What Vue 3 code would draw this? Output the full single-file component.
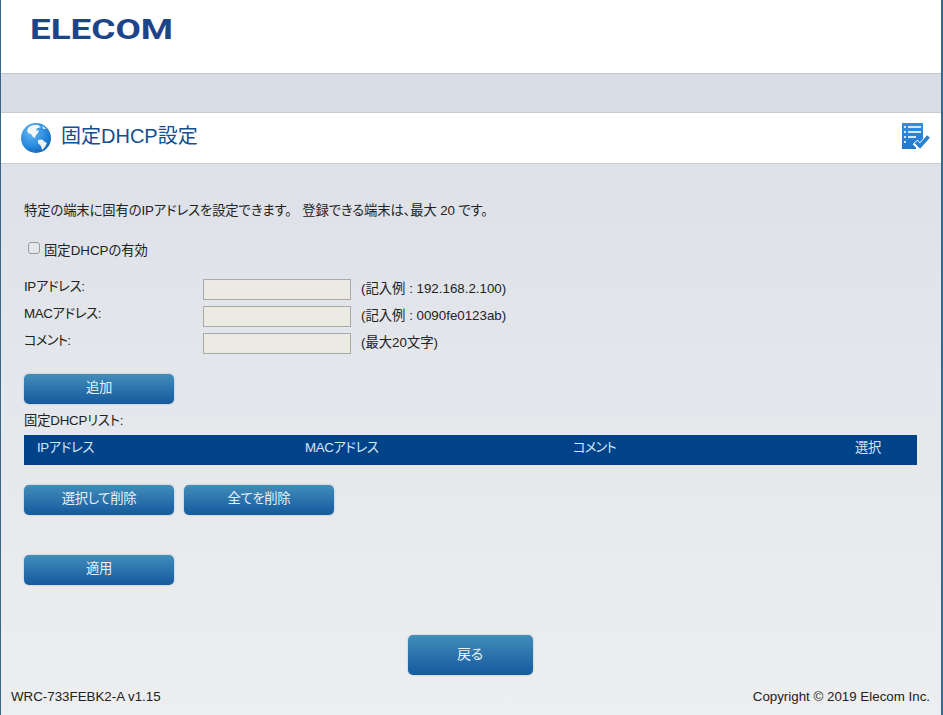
<script setup>
const rows = [
  { label: 'IPアドレス:', hint: '(記入例 : 192.168.2.100)' },
  { label: 'MACアドレス:', hint: '(記入例 : 0090fe0123ab)' },
  { label: 'コメント:', hint: '(最大20文字)' }
]
const cols = ['IPアドレス', 'MACアドレス', 'コメント', '選択']
</script>

<template>
  <div class="page">
    <header class="top">
      <svg class="logo" width="150" height="34" viewBox="0 0 150 34">
        <text x="-1" y="29" textLength="143" lengthAdjust="spacingAndGlyphs">ELECOM</text>
      </svg>
    </header>
    <div class="band"></div>
    <div class="title">
      <svg class="globe" width="32" height="32" viewBox="0 0 32 32">
        <defs>
          <radialGradient id="g" cx="35%" cy="30%" r="80%">
            <stop offset="0" stop-color="#62b8f2" />
            <stop offset="0.6" stop-color="#2a8ae0" />
            <stop offset="1" stop-color="#0f5fae" />
          </radialGradient>
        </defs>
        <circle cx="16" cy="16" r="15" fill="url(#g)" />
        <path d="M9 5c3-2 6-2.500 9-2l3 2-3 1-2 1 1 2 2-1-1 3-2 2-1 3-2-1-2-3-3-1-1-3z" fill="#f4f7f9" />
        <path d="M18 18l4-0.500 3 2.500 2 1-2 4-3 3-1-4-3-3z" fill="#eef3f2" />
        <path d="M22 4l2 1 2 2-3 0z" fill="#dfeaf3" />
      </svg>
      <h1>固定DHCP設定</h1>
      <svg class="check" width="30" height="30" viewBox="0 0 30 30">
        <defs>
          <linearGradient id="c" x1="0" y1="0" x2="0" y2="1">
            <stop offset="0" stop-color="#2f8fe6" />
            <stop offset="1" stop-color="#2277c9" />
          </linearGradient>
        </defs>
        <path d="M1 1h21v18l-7 6v2H1z" fill="url(#c)" />
        <g fill="#cfe7fa">
          <rect x="3" y="4" width="2" height="2" /><rect x="7" y="4" width="13" height="2" />
          <rect x="3" y="9" width="2" height="2" /><rect x="7" y="9" width="13" height="2" />
          <rect x="3" y="14" width="2" height="2" /><rect x="7" y="14" width="8" height="2" />
          <rect x="3" y="19" width="2" height="2" />
        </g>
        <path d="M14 20l5 5 9-10" fill="none" stroke="#fff" stroke-width="6.500" />
        <path d="M15 20l4 4 8.500-9.500" fill="none" stroke="#2a80d0" stroke-width="3.800" />
      </svg>
    </div>

    <main class="content">
      <p class="intro">特定の端末に固有のIPアドレスを設定できます。&nbsp;&nbsp; 登録できる端末は、最大 20 です。</p>
      <label class="enable"><input type="checkbox" /><span>固定DHCPの有効</span></label>
      <div class="form">
        <div v-for="r in rows" :key="r.label" class="row">
          <span class="lbl">{{ r.label }}</span>
          <input class="field" type="text" />
          <span class="hint">{{ r.hint }}</span>
        </div>
      </div>
      <button class="btn add">追加</button>
      <div class="list-label">固定DHCPリスト:</div>
      <div class="thead">
        <span v-for="c in cols" :key="c">{{ c }}</span>
      </div>
      <div class="actions">
        <button class="btn">選択して削除</button>
        <button class="btn">全てを削除</button>
      </div>
      <button class="btn apply">適用</button>
      <div class="back-wrap"><button class="btn back">戻る</button></div>
      <footer class="foot">
        <span>WRC-733FEBK2-A v1.15</span>
        <span>Copyright © 2019 Elecom Inc.</span>
      </footer>
    </main>
  </div>
</template>

<style>
html, body { margin: 0; padding: 0; }
</style>

<style scoped>
.page {
  width: 943px;
  height: 715px;
  box-sizing: border-box;
  border-left: 1px solid #3a6585;
  border-right: 2px solid #2f6b92;
  overflow: hidden;
  background: linear-gradient(#d9dee6 0%, #edeeef 100%);
  font-family: "Liberation Sans", "Noto Sans CJK JP", sans-serif;
  font-feature-settings: "palt";
  font-size: 13.33px;
  color: #222;
}
.top {
  height: 74px;
  background: #fff;
  border-bottom: 1px solid #c3c6cb;
  box-sizing: border-box;
  padding: 10px 0 0 30px;
}
.logo { display: block; overflow: visible; }
.logo text {
  font-family: Roboto, sans-serif;
  font-weight: 700;
  font-size: 27px;
  fill: #1c4489;
}
.band { height: 38px; background: #d9dee6; }
.title {
  height: 52px;
  box-sizing: border-box;
  background: #fff;
  border-top: 1px solid #c8ccd2;
  border-bottom: 1px solid #c8ccd2;
  display: flex;
  align-items: center;
  padding: 0 10px 0 19px;
}
.globe { flex: none; }
.check { flex: none; margin-bottom: 3px; }
h1 {
  margin: 0 0 8px 9px;
  flex: 1;
  font-size: 20px;
  font-weight: 400;
  color: #124f8e;
}
.content { padding: 0 23px; height: 551px; position: relative; }
.intro { margin: 0; padding-top: 39px; line-height: 15px; letter-spacing: -0.12px; }
.enable { display: flex; align-items: center; margin: 21px 0 0 3px; height: 20px; }
.enable input {
  appearance: none;
  width: 12px;
  height: 12px;
  margin: 0 4px 3px 1px;
  border: 1px solid #999;
  border-radius: 3px;
  background: #e4e6ea;
}
.form { margin-top: 20px; }
.row { display: flex; height: 27px; align-items: flex-start; }
.lbl { width: 179px; line-height: 14px; padding-top: 1px; letter-spacing: -0.35px; }
.row:last-child .lbl { letter-spacing: -0.8px; }
.field {
  width: 148px;
  height: 21px;
  flex: none;
  box-sizing: border-box;
  border: 1px solid #a9a9a9;
  background: #ebebe4;
  padding: 0;
  margin: 0;
}
.hint { margin-left: 10px; line-height: 20px; }
.btn {
  display: block;
  width: 150px;
  height: 30px;
  padding: 0 0 5px;
  border: 0;
  border-radius: 5px;
  background: linear-gradient(#418dba, #155a9e);
  box-shadow: 0 0 2px rgba(120, 130, 140, 0.5);
  color: #e8f1f6;
  font: inherit;
  font-feature-settings: inherit;
  letter-spacing: -0.3px;
}
.add { margin-top: 14px; }
.list-label { margin-top: 9px; line-height: 16px; letter-spacing: -0.2px; }
.thead {
  margin-top: 6px;
  width: 893px;
  height: 30px;
  box-sizing: border-box;
  background: #004388;
  color: #d5e6f4;
  display: grid;
  grid-template-columns: 268px 268px 282px 1fr;
  padding: 5px 0 0 13px;
  line-height: 16px;
  letter-spacing: -0.4px;
}
.thead span:nth-child(3) { letter-spacing: -0.9px; }
.actions { display: flex; gap: 10px; margin-top: 20px; }
.apply { margin-top: 40px; }
.back-wrap { display: flex; justify-content: center; margin: 50px 2px 0 0; }
.back { width: 125px; height: 40px; font-size: 14px; }
.foot {
  position: absolute;
  left: 10px;
  right: 11px;
  top: 525px;
  display: flex;
  justify-content: space-between;
}
</style>
